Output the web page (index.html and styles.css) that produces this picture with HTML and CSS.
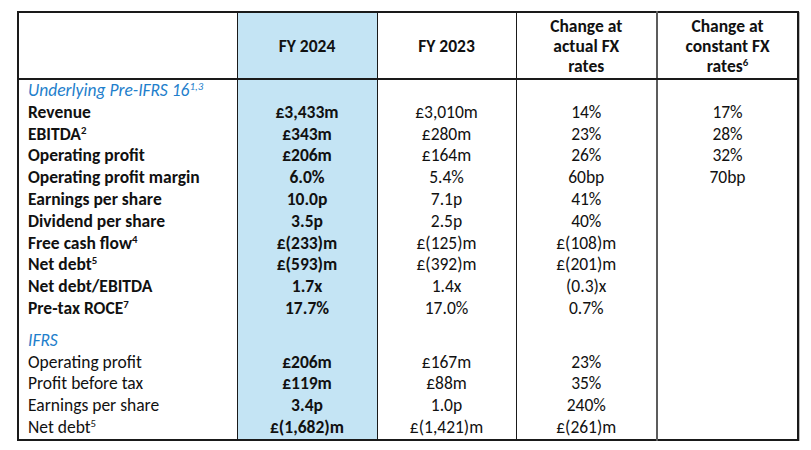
FILE: index.html
```html
<!DOCTYPE html>
<html>
<head>
<meta charset="utf-8">
<link rel="stylesheet" href="styles.css">
</head>
<body>
<table class="kpi">
  <colgroup>
    <col class="c-label"><col class="c-fy24"><col class="c-fy23"><col class="c-act"><col class="c-const">
  </colgroup>
  <thead>
    <tr>
      <th class="label"></th>
      <th class="fy24">FY 2024</th>
      <th>FY 2023</th>
      <th>Change at<br>actual FX<br>rates</th>
      <th class="const">Change at<br>constant FX<br>rates<sup>6</sup></th>
    </tr>
  </thead>
  <tbody>
    <tr><td class="label section">Underlying Pre-IFRS 16<sup>1,3</sup></td><td class="fy24"></td><td></td><td></td><td class="const"></td></tr>
    <tr class="b"><td class="label">Revenue</td><td class="fy24">£3,433m</td><td>£3,010m</td><td>14%</td><td class="const">17%</td></tr>
    <tr class="b"><td class="label">EBITDA<sup>2</sup></td><td class="fy24">£343m</td><td>£280m</td><td>23%</td><td class="const">28%</td></tr>
    <tr class="b"><td class="label">Operating profit</td><td class="fy24">£206m</td><td>£164m</td><td>26%</td><td class="const">32%</td></tr>
    <tr class="b"><td class="label">Operating profit margin</td><td class="fy24">6.0%</td><td>5.4%</td><td>60bp</td><td class="const">70bp</td></tr>
    <tr class="b"><td class="label">Earnings per share</td><td class="fy24">10.0p</td><td>7.1p</td><td>41%</td><td class="const"></td></tr>
    <tr class="b"><td class="label">Dividend per share</td><td class="fy24">3.5p</td><td>2.5p</td><td>40%</td><td class="const"></td></tr>
    <tr class="b"><td class="label">Free cash flow<sup>4</sup></td><td class="fy24">£(233)m</td><td>£(125)m</td><td>£(108)m</td><td class="const"></td></tr>
    <tr class="b"><td class="label">Net debt<sup>5</sup></td><td class="fy24">£(593)m</td><td>£(392)m</td><td>£(201)m</td><td class="const"></td></tr>
    <tr class="b"><td class="label">Net debt/EBITDA</td><td class="fy24">1.7x</td><td>1.4x</td><td>(0.3)x</td><td class="const"></td></tr>
    <tr class="b"><td class="label">Pre-tax ROCE<sup>7</sup></td><td class="fy24">17.7%</td><td>17.0%</td><td>0.7%</td><td class="const"></td></tr>
    <tr class="spacer"><td class="label"></td><td class="fy24"></td><td></td><td></td><td class="const"></td></tr>
    <tr><td class="label section">IFRS</td><td class="fy24"></td><td></td><td></td><td class="const"></td></tr>
    <tr><td class="label">Operating profit</td><td class="fy24">£206m</td><td>£167m</td><td>23%</td><td class="const"></td></tr>
    <tr><td class="label">Profit before tax</td><td class="fy24">£119m</td><td>£88m</td><td>35%</td><td class="const"></td></tr>
    <tr><td class="label">Earnings per share</td><td class="fy24">3.4p</td><td>1.0p</td><td>240%</td><td class="const"></td></tr>
    <tr><td class="label">Net debt<sup>5</sup></td><td class="fy24">£(1,682)m</td><td>£(1,421)m</td><td>£(261)m</td><td class="const"></td></tr>
  </tbody>
</table>
</body>
</html>
```
FILE: styles.css
```css
html, body {
  margin: 0;
  padding: 0;
  background: #ffffff;
}
body {
  padding: 11px 0 0 17px;
  font-family: "Carlito", "Lato", "Open Sans", sans-serif;
  font-size: 17.5px;
  color: #111111;
}
.kpi {
  border-collapse: collapse;
  table-layout: fixed;
  width: 780px;
  border: 2px solid #1a1a1a;
  box-shadow: 1px 1px 0 #bbbbbb;
}
.c-label { width: 219px; }
.c-fy24 { width: 140px; }
.c-fy23 { width: 139px; }
.c-act { width: 141px; }
.c-const { width: 141px; }

.kpi th, .kpi td {
  border-left: 1px solid #1a1a1a;
  border-right: 1px solid #1a1a1a;
  text-align: center;
  padding: 0;
  white-space: nowrap;
}
.kpi th {
  font-weight: bold;
  height: 64px;
  line-height: 20px;
  border-bottom: 2px solid #1a1a1a;
  vertical-align: middle;
  padding-top: 1px;
}
.kpi td {
  height: 21.8px;
  line-height: 21.8px;
}
.kpi .const {
  border-left: 2px solid #5c5c5c;
}
.kpi .label {
  text-align: left;
  padding-left: 9px;
}
.kpi .fy24 {
  background: #c4e4f4;
  font-weight: bold;
}
.kpi tr.b .label {
  font-weight: bold;
}
.kpi .section {
  color: #1f7fcc;
  font-style: italic;
}
.kpi tr.spacer td {
  height: 10px;
  line-height: 10px;
}
sup {
  font-size: 0.62em;
  line-height: 0;
  vertical-align: 0.55em;
}
```
